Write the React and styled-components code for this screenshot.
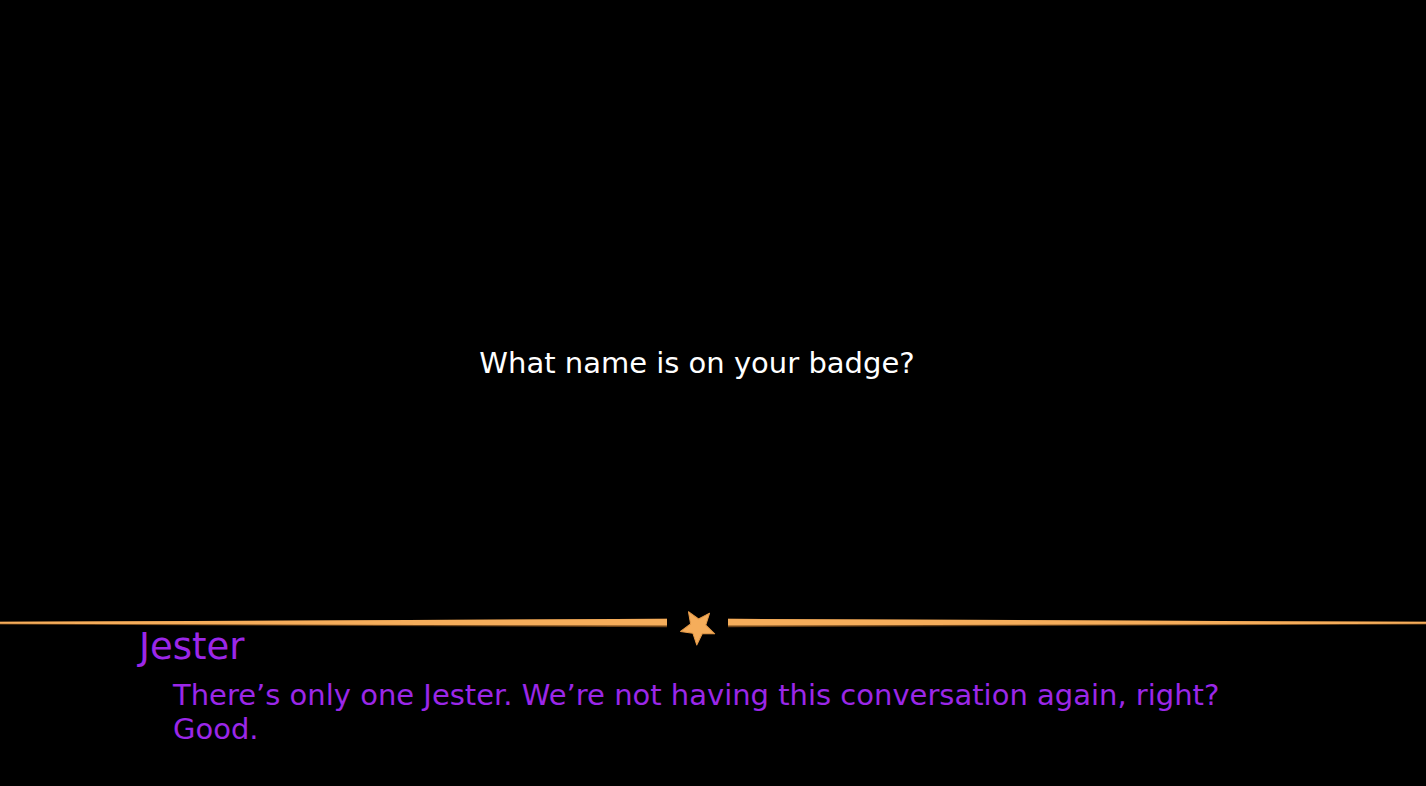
import React from "react";
import styled, { createGlobalStyle } from "styled-components";

const Global = createGlobalStyle`
  html, body {
    margin: 0;
    padding: 0;
    background: #000000;
  }
  body {
    font-family: "DejaVu Sans", "Liberation Sans", sans-serif;
  }
`;

const Screen = styled.div`
  width: 100vw;
  height: 100vh;
  display: flex;
  flex-direction: column;
  background: #000000;
  overflow: hidden;
`;

const Stage = styled.div`
  height: 615px;
  padding: 345px 32px 0 0;
  box-sizing: border-box;
  text-align: center;
`;

const Question = styled.p`
  margin: 0;
  color: #ffffff;
  font-size: 29px;
  line-height: 36px;
`;

const Divider = styled.div`
  height: 16px;
  display: flex;
  align-items: center;
`;

const Bar = styled.svg`
  flex: ${props => props.grow};
  height: 10px;
  display: block;
`;

const StarSlot = styled.div`
  width: 61px;
  height: 16px;
  display: flex;
  justify-content: center;
  align-items: center;
  overflow: visible;
`;

const Star = styled.svg`
  width: 40px;
  height: 40px;
  flex: none;
  transform: translateY(4px) rotate(4deg);
`;

const Box = styled.div`
  flex: 1;
  padding-left: 139px;
`;

const Who = styled.div`
  color: #9b27e8;
  font-size: 37px;
  line-height: 32px;
`;

const Say = styled.p`
  margin: 15px 0 0 34px;
  width: 1090px;
  color: #9b27e8;
  font-size: 29px;
  line-height: 34px;
`;

// tapered gold rule; "flip" mirrors it so the thick end faces the star
function GoldBar({ grow, flip }) {
  return (
    <Bar grow={grow} viewBox="0 0 100 10" preserveAspectRatio="none">
      <g transform={flip ? "translate(100 0) scale(-1 1)" : undefined}>
        <polygon points="0,3.8 100,0.8 100,9.2 0,6.4" fill="#6e4419" />
        <polygon points="0,3.8 100,0.8 100,7.6 0,5.8" fill="#f5ad5b" />
      </g>
    </Bar>
  );
}

export default function App() {
  return (
    <Screen>
      <Global />
      <Stage>
        <Question>What name is on your badge?</Question>
      </Stage>
      <Divider>
        <GoldBar grow="667" />
        <StarSlot>
          <Star viewBox="0 0 40 40">
            <polygon
              points="20,38 15.3,26.5 2.9,25.6 12.4,17.5 9.4,5.4 20,12 30.6,5.4 27.6,17.5 37.1,25.6 24.7,26.5"
              fill="#f5ad5b"
              stroke="#e59a48"
              strokeWidth="1"
              strokeLinejoin="round"
            />
          </Star>
        </StarSlot>
        <GoldBar grow="698" flip />
      </Divider>
      <Box>
        <Who>Jester</Who>
        <Say>There’s only one Jester. We’re not having this conversation again, right? Good.</Say>
      </Box>
    </Screen>
  );
}
